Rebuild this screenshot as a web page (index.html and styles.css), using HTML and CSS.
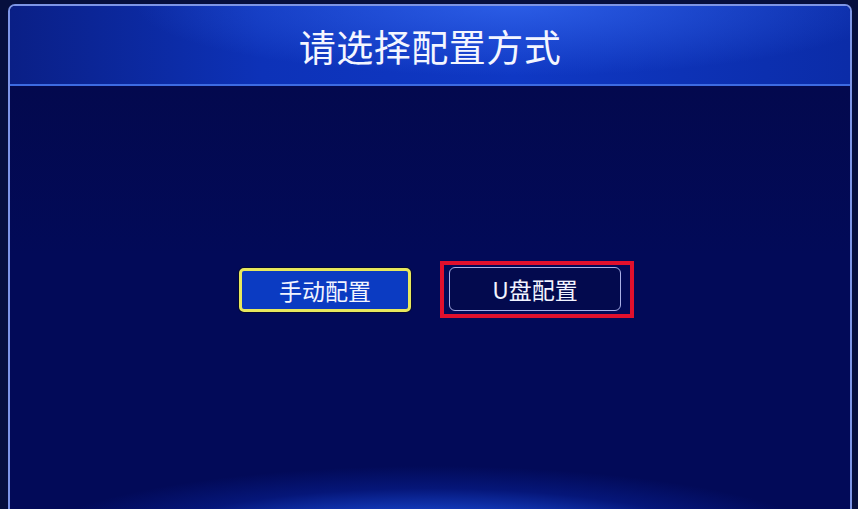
FILE: index.html
```html
<!DOCTYPE html>
<html lang="zh-CN">
<head>
<meta charset="utf-8">
<title>请选择配置方式</title>
<link rel="stylesheet" href="styles.css">
</head>
<body>
<div class="panel">
  <header class="panel-head">
    <h1 class="panel-title">请选择配置方式</h1>
  </header>
  <main class="panel-body">
    <div class="choices">
      <button class="btn btn-focus" type="button">手动配置</button>
      <div class="mark">
        <button class="btn btn-plain" type="button">U盘配置</button>
      </div>
    </div>
  </main>
</div>
</body>
</html>
```
FILE: styles.css
```css
html, body {
  margin: 0;
  height: 100%;
  overflow: hidden;
}

body {
  background: #060f3e;
  font-family: "Noto Sans CJK SC", "Noto Sans", sans-serif;
  color: #fff;
}

.panel {
  margin: 4px 6px 0 8px;
  height: calc(100vh - 4px);
  box-sizing: border-box;
  border: 2px solid #7d95e6;
  border-bottom: none;
  border-radius: 7px 7px 0 0;
  overflow: hidden;
  display: flex;
  flex-direction: column;
  background: #020a58;
}

.panel-head {
  height: 78px;
  flex: none;
  display: flex;
  align-items: center;
  justify-content: center;
  background:
    radial-gradient(ellipse 45% 90% at 60% 0%, rgba(52, 104, 240, 0.75), rgba(52, 104, 240, 0) 100%),
    linear-gradient(90deg, #0a1f86 0%, #0d32b8 30%, #0f38c4 60%, #0b2ca8 100%);
  border-bottom: 2px solid #3d6be2;
  box-shadow: 0 1px 2px rgba(0, 0, 40, 0.6);
}

.panel-title {
  margin: 2px 0 0;
  font-size: 37px;
  font-weight: 400;
  letter-spacing: 0.5px;
  line-height: 1;
  color: #f4f6ff;
}

/* body with the soft blue glow rising from the bottom edge */
.panel-body {
  flex: 1;
  background:
    radial-gradient(ellipse 420px 90px at 50% 470px, rgba(40, 104, 250, 1) 0%, rgba(28, 84, 235, 0.85) 40%, rgba(10, 40, 170, 0.4) 75%, rgba(2, 10, 88, 0) 100%),
    linear-gradient(180deg, #03094e 0%, #020a58 40%, #020a58 100%);
}

.choices {
  display: flex;
  align-items: center;
  justify-content: center;
  gap: 29px;
  padding: 175px 0 0 13px;
}

.btn {
  width: 172px;
  height: 44px;
  font-family: inherit;
  font-size: 23px;
  font-weight: 400;
  color: #f2f4ff;
  display: flex;
  align-items: center;
  justify-content: center;
  padding: 0;
  cursor: pointer;
}

.btn-focus {
  background: #0b3bc2;
  border: 3px solid #e8e85c;
  border-radius: 5px;
  box-shadow: 0 0 0 1px #050a30;
}

.btn-plain {
  background: #030a4e;
  border: 1px solid #aab0e6;
  border-radius: 6px;
}

.mark {
  border: 4px solid #e1102d;
  padding: 2px 9px 3px 5px;
}
```
